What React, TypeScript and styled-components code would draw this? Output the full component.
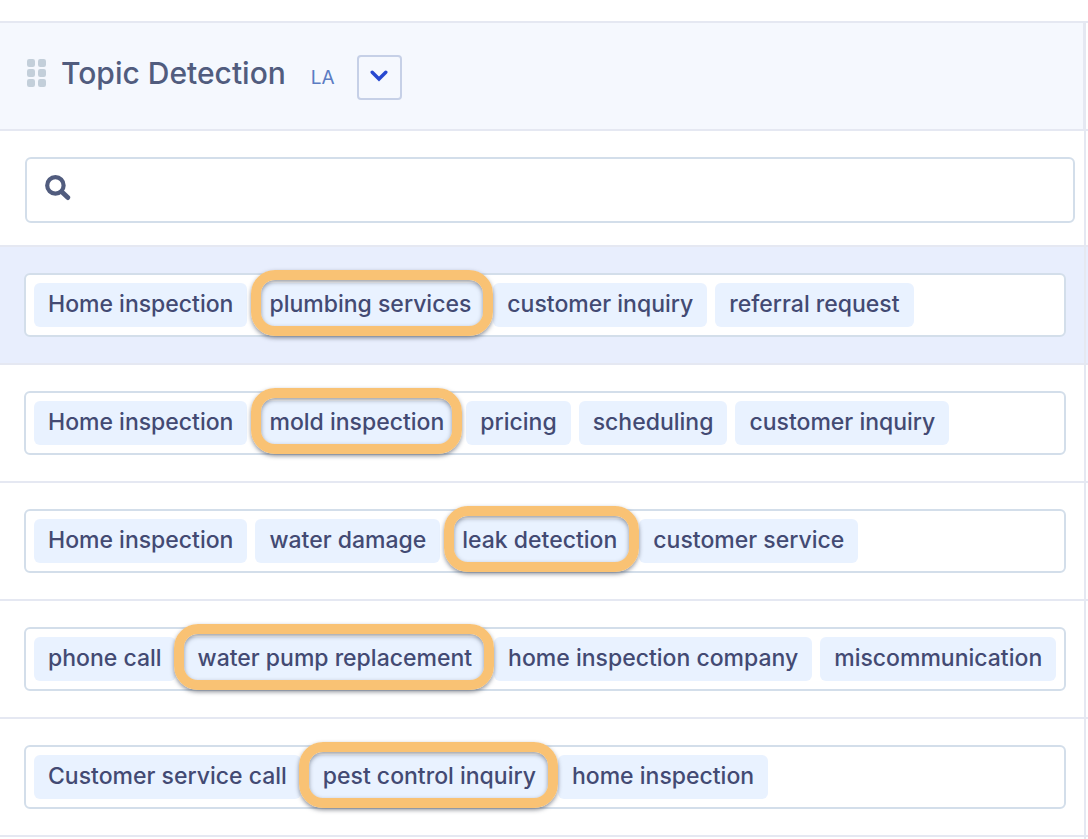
import React from "react";
import styled, { createGlobalStyle } from "styled-components";

const color = {
  line: "#e5e8f2",
  header: "#f5f8fe",
  selected: "#e8eefd",
  field: "#d3deea",
  chip: "#e9f2ff",
  chipText: "#434a73",
  title: "#515c7e",
  ring: "#f9c274",
};

const GlobalStyle = createGlobalStyle`
  *, *::before, *::after { box-sizing: border-box; }
  body {
    margin: 0;
    background: #fff;
    font-family: Inter, "Liberation Sans", sans-serif;
  }
`;

const Page = styled.main`
  display: flex;
  flex-direction: column;
  min-height: 100vh;
  padding-top: 21px;
  overflow: hidden;
`;

const Band = styled.div<{ $grow?: boolean }>`
  display: flex;
  flex-grow: ${(p) => (p.$grow ? 1 : 0)};
`;

const NextColumn = styled.div<{ $lined?: boolean }>`
  width: 2px;
  border-top: ${(p) => (p.$lined ? `2px solid ${color.line}` : "0")};
  border-bottom: 2px solid ${color.line};
`;

const HeaderCell = styled.header`
  flex: 1;
  display: flex;
  align-items: flex-start;
  height: 110px;
  padding: 32px 24px 0 27px;
  background: ${color.header};
  border: solid ${color.line};
  border-width: 2px 3px 2px 0;
`;

const Grip = styled.svg`
  width: 19px;
  height: 28px;
  margin: 4px 15px 0 0;
  fill: #c3cfda;
`;

const Title = styled.h1`
  margin: 0;
  color: ${color.title};
  font-size: 30px;
  font-weight: 500;
  line-height: 36px;
`;

const Tag = styled.span`
  margin: 0 22px 0 25px;
  color: #5b7cc3;
  font-size: 19px;
  line-height: 46px;
`;

const MenuButton = styled.button`
  display: flex;
  align-items: center;
  justify-content: center;
  width: 45px;
  height: 45px;
  padding: 0 0 3px;
  background: ${color.header};
  border: 2px solid #c6d0e7;
  border-radius: 4px;
`;

const SearchCell = styled.div`
  flex: 1;
  padding: 26px 9px 22px 25px;
  border: solid ${color.line};
  border-width: 0 2px 2px 0;
`;

const SearchField = styled.label`
  display: flex;
  align-items: center;
  height: 66px;
  padding: 0 18px;
  border: 2px solid ${color.field};
  border-radius: 6px;
`;

const SearchIcon = styled.svg`
  width: 26px;
  height: 26px;
  margin-bottom: 4px;
  fill: none;
  stroke: ${color.title};
`;

const SearchInput = styled.input`
  flex: 1;
  min-width: 0;
  margin-left: 12px;
  border: 0;
  outline: 0;
  background: transparent;
  color: ${color.chipText};
  font: 500 23px Inter, sans-serif;
`;

const Rows = styled.ul`
  margin: 0;
  padding: 0;
  list-style: none;
`;

const Row = styled.li<{ $selected?: boolean }>`
  display: flex;
  background: ${(p) => (p.$selected ? color.selected : "#fff")};
  border-bottom: 2px solid ${color.line};
`;

const RowCell = styled.div`
  flex: 1;
  min-width: 0;
  margin-right: 2px;
  padding: 26px 18px 26px 24px;
  border-right: 2px solid ${color.line};
`;

const ChipBox = styled.ul`
  display: flex;
  gap: 8px;
  height: 64px;
  margin: 0;
  padding: 8px;
  background: #fff;
  border: 2px solid ${color.field};
  border-radius: 6px;
  list-style: none;
`;

const Chip = styled.li`
  position: relative;
  height: 44px;
  padding: 0 14px;
  background: ${color.chip};
  border-radius: 6px;
  color: ${color.chipText};
  font-size: 23px;
  font-weight: 500;
  line-height: 42px;
  white-space: nowrap;
`;

const Ring = styled.span<{ $left: number; $right: number }>`
  position: absolute;
  z-index: 1;
  top: -13px;
  left: -${(p) => p.$left}px;
  right: -${(p) => p.$right}px;
  height: 66px;
  border: 10px solid ${color.ring};
  border-radius: 24px;
  box-shadow: 0 2px 4px rgba(50, 55, 70, 0.55), inset 0 2px 4px rgba(50, 55, 70, 0.5);
  pointer-events: none;
`;

const Filler = styled.div`
  flex: 1;
  margin-right: 2px;
  border-right: 2px solid ${color.line};
`;

type Topic = { text: string; ring?: [number, number] };

const rows: Topic[][] = [
  [
    { text: "Home inspection" },
    { text: "plumbing services", ring: [4, 8] },
    { text: "customer inquiry" },
    { text: "referral request" },
  ],
  [
    { text: "Home inspection" },
    { text: "mold inspection", ring: [4, 4] },
    { text: "pricing" },
    { text: "scheduling" },
    { text: "customer inquiry" },
  ],
  [
    { text: "Home inspection" },
    { text: "water damage" },
    { text: "leak detection", ring: [4, 8] },
    { text: "customer service" },
  ],
  [
    { text: "phone call" },
    { text: "water pump replacement", ring: [10, 8] },
    { text: "home inspection company" },
    { text: "miscommunication" },
  ],
  [
    { text: "Customer service call" },
    { text: "pest control inquiry", ring: [10, 8] },
    { text: "home inspection" },
  ],
];

export default function App() {
  return (
    <>
      <GlobalStyle />
      <Page>
        <Band>
          <HeaderCell>
            <Grip viewBox="0 0 19 28" aria-hidden="true">
              {[0, 11].map((x) =>
                [0, 10, 20].map((y) => (
                  <rect key={`${x}-${y}`} x={x} y={y} width="8" height="8" rx="2.2" />
                ))
              )}
            </Grip>
            <Title>Topic Detection</Title>
            <Tag>LA</Tag>
            <MenuButton type="button" aria-label="Column options">
              <svg width="18" height="12" viewBox="0 0 18 12" aria-hidden="true">
                <path
                  d="M2.2 2.2 9 9 15.8 2.2"
                  fill="none"
                  stroke="#2748d0"
                  strokeWidth="3.4"
                  strokeLinecap="round"
                />
              </svg>
            </MenuButton>
          </HeaderCell>
          <NextColumn $lined />
        </Band>
        <Band>
          <SearchCell>
            <SearchField>
              <SearchIcon viewBox="0 0 26 26" aria-hidden="true">
                <circle cx="10.4" cy="10.4" r="8.2" strokeWidth="4.2" />
                <path d="M17 17 22.8 22.6" strokeWidth="4.8" strokeLinecap="round" />
              </SearchIcon>
              <SearchInput type="search" aria-label="Search topics" />
            </SearchField>
          </SearchCell>
          <NextColumn />
        </Band>
        <Rows>
          {rows.map((topics, i) => (
            <Row key={i} $selected={i === 0}>
              <RowCell>
                <ChipBox>
                  {topics.map((t) => (
                    <Chip key={t.text}>
                      {t.text}
                      {t.ring && <Ring $left={t.ring[0]} $right={t.ring[1]} />}
                    </Chip>
                  ))}
                </ChipBox>
              </RowCell>
            </Row>
          ))}
        </Rows>
        <Band $grow>
          <Filler />
        </Band>
      </Page>
    </>
  );
}
